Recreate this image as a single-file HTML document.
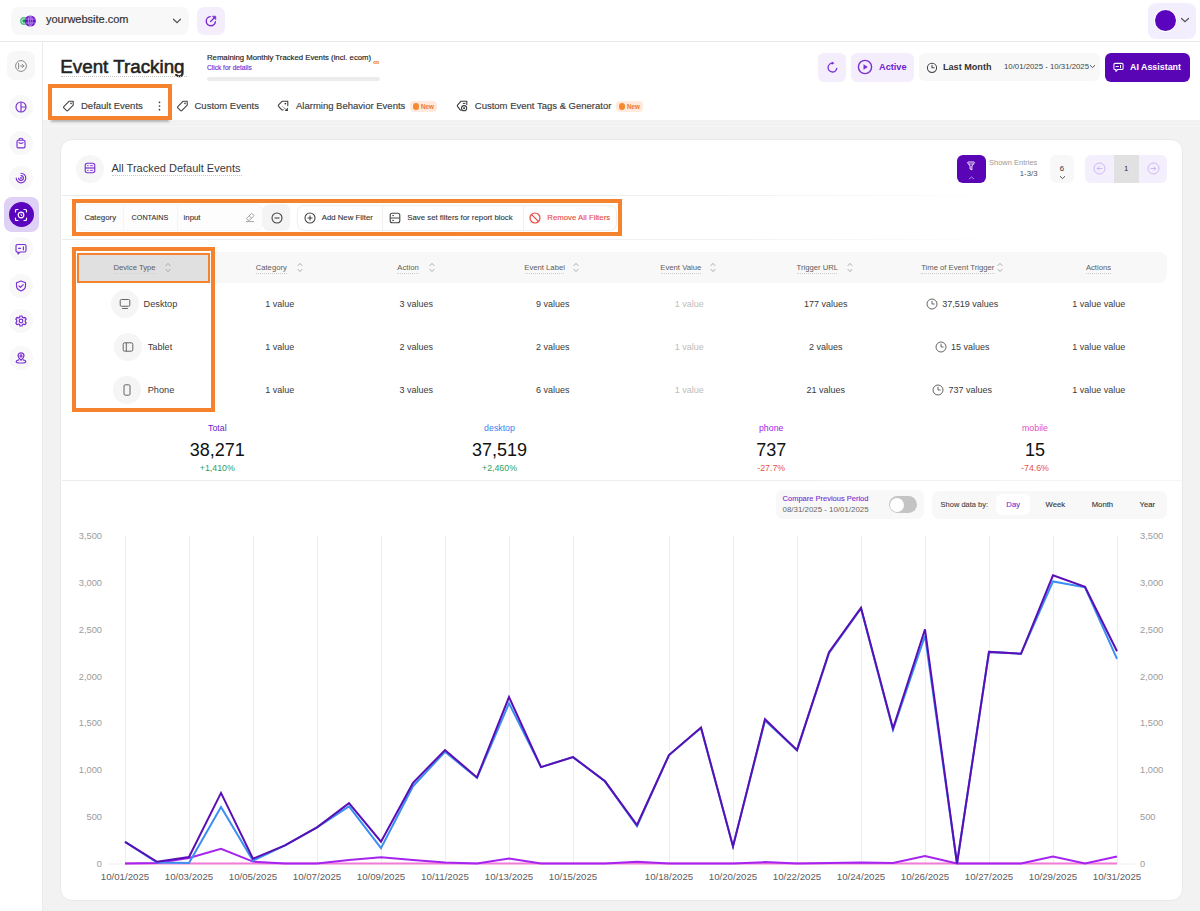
<!DOCTYPE html>
<html><head><meta charset="utf-8">
<style>
*{margin:0;padding:0;box-sizing:border-box}
html,body{width:1200px;height:911px;overflow:hidden;background:#fff;font-family:"Liberation Sans",sans-serif;color:#333}
.a{position:absolute}
.t{position:absolute;white-space:nowrap;line-height:20px;height:20px}
.c{text-align:center}
svg{display:block}
</style></head><body>

<!-- top header -->
<div class="a" style="left:0;top:41px;width:1200px;height:1px;background:#e9e9e9"></div>
<div class="a" style="left:10.5px;top:7px;width:178.5px;height:28px;border-radius:8px;background:#f8f8f8"></div>
<svg class="a" style="left:19px;top:13.6px" width="18" height="14" viewBox="0 0 18 14">
  <circle cx="5" cy="7" r="3.9" fill="#4fbf83"/>
  <circle cx="5" cy="7" r="2.5" fill="#dff5e8"/>
  <circle cx="5" cy="7" r="1.8" fill="#14a04c"/>
  <circle cx="11.3" cy="7" r="5.6" fill="#6a12c9"/>
  <g stroke="#e9dcfa" stroke-width="0.6" fill="none" opacity="0.85"><ellipse cx="11.3" cy="7" rx="2" ry="5.4"/><path d="M6 5 H16.6 M6 9 H16.6 M11.3 1.6 V12.4"/></g>
</svg>
<div class="t" style="left:46px;top:9.4px;font-size:11px;color:#333;-webkit-text-stroke:0.2px #333">yourwebsite.com</div>
<svg class="a" style="left:171.5px;top:16.5px" width="10" height="8" viewBox="0 0 10 8"><path d="M1.5 2.2 L5 5.6 L8.5 2.2" stroke="#555" stroke-width="1.2" fill="none" stroke-linecap="round"/></svg>
<div class="a" style="left:197px;top:7px;width:28px;height:27.5px;border-radius:7px;background:#f3edfc"></div>
<svg class="a" style="left:204px;top:13.6px" width="14" height="14" viewBox="0 0 14 14"><path d="M6.3 2.6 A4.6 4.6 0 1 0 11.4 7.7" stroke="#7a2ed4" stroke-width="1.4" fill="none" stroke-linecap="round"/><path d="M6.6 7.4 L10.6 3.4" stroke="#7a2ed4" stroke-width="1.4" stroke-linecap="round"/><path d="M8.3 2.2 H11.8 V5.7 Z" fill="#7a2ed4" stroke="#7a2ed4" stroke-width="0.6" stroke-linejoin="round"/></svg>
<div class="a" style="left:1148px;top:3px;width:48px;height:36px;border-radius:8px;background:#f3eefd"></div>
<div class="a" style="left:1154px;top:9px;width:23px;height:23px;border-radius:50%;background:#fff"></div>
<div class="a" style="left:1155px;top:10px;width:21px;height:21px;border-radius:50%;background:#5a05bd"></div>
<svg class="a" style="left:1180px;top:16px" width="10" height="8" viewBox="0 0 10 8"><path d="M1.5 2.5 L5 5.8 L8.5 2.5" stroke="#555" stroke-width="1.2" fill="none" stroke-linecap="round"/></svg>

<!-- sidebar -->
<div class="a" style="left:42px;top:42px;width:1px;height:869px;background:#ececec"></div>

<div class="a" style="left:7px;top:51px;width:28px;height:29px;border-radius:8px;background:#f7f7f7"></div>
<svg class="a" style="left:14px;top:58.5px" width="14" height="14" viewBox="0 0 14 14"><circle cx="7" cy="7" r="5.4" stroke="#8c8c8c" stroke-width="1" fill="none"/><path d="M4.6 4.4 V9.6 M6.2 7 H9.8 M8.2 5.3 L9.9 7 L8.2 8.7" stroke="#8c8c8c" stroke-width="1" fill="none" stroke-linecap="round" stroke-linejoin="round"/></svg>
<div class="a" style="left:9px;top:95px;width:24px;height:24px;border-radius:50%;background:#f8f8f8"></div>
<svg class="a" style="left:15px;top:101px" width="12" height="12" viewBox="0 0 12 12"><circle cx="6" cy="6" r="5" stroke="#7a2ed4" stroke-width="1.15" fill="none"/><path d="M6 1 V11 M6 6 H11" stroke="#7a2ed4" stroke-width="1.15" fill="none"/></svg>
<div class="a" style="left:9px;top:131px;width:24px;height:24px;border-radius:50%;background:#f8f8f8"></div>
<svg class="a" style="left:15px;top:137px" width="12" height="12" viewBox="0 0 12 12"><path d="M2 4.5 Q2 3.2 3.3 3.2 H8.7 Q10 3.2 10 4.5 V9.5 Q10 10.8 8.7 10.8 H3.3 Q2 10.8 2 9.5 Z M4 3.2 Q4 1.2 6 1.2 Q8 1.2 8 3.2 M4 5.6 Q6 7.2 8 5.6" stroke="#7a2ed4" stroke-width="1.15" fill="none" stroke-linecap="round"/></svg>
<div class="a" style="left:9px;top:166px;width:24px;height:24px;border-radius:50%;background:#f8f8f8"></div>
<svg class="a" style="left:15px;top:172px" width="12" height="12" viewBox="0 0 12 12"><path d="M6 1.2 A4.8 4.8 0 1 1 1.2 6 M6 3.6 A2.4 2.4 0 1 1 3.6 6" stroke="#7a2ed4" stroke-width="1.15" fill="none" stroke-linecap="round"/><circle cx="6" cy="6" r="0.9" fill="#7a2ed4"/></svg>
<div class="a" style="left:4px;top:197px;width:34.5px;height:35px;border-radius:8px;background:#dfd0f5"></div>
<div class="a" style="left:8.5px;top:202px;width:25px;height:25px;border-radius:50%;background:#5a05bd"></div>
<svg class="a" style="left:14px;top:207.5px" width="14" height="14" viewBox="0 0 14 14"><path d="M1.5 4 V2.5 Q1.5 1.5 2.5 1.5 H4 M10 1.5 H11.5 Q12.5 1.5 12.5 2.5 V4 M12.5 10 V11.5 Q12.5 12.5 11.5 12.5 H10 M4 12.5 H2.5 Q1.5 12.5 1.5 11.5 V10" stroke="#fff" stroke-width="1.2" fill="none" stroke-linecap="round"/><circle cx="7" cy="7" r="2.8" stroke="#fff" stroke-width="1.2" fill="none"/><path d="M7 5.6 V7.2 L8 7.8" stroke="#fff" stroke-width="0.9" fill="none"/></svg>
<div class="a" style="left:9px;top:237px;width:24px;height:24px;border-radius:50%;background:#f8f8f8"></div>
<svg class="a" style="left:15px;top:243px" width="12" height="12" viewBox="0 0 12 12"><path d="M2.5 1.5 H9.5 Q11 1.5 11 3 V7.5 Q11 9 9.5 9 H5 L3 11 V9 H2.5 Q1 9 1 7.5 V3 Q1 1.5 2.5 1.5 Z" stroke="#7a2ed4" stroke-width="1.15" fill="none" stroke-linejoin="round"/><path d="M3.6 5.3 H5.6 M8.4 3.8 V6.8" stroke="#7a2ed4" stroke-width="1.15" stroke-linecap="round"/></svg>
<div class="a" style="left:9px;top:274px;width:24px;height:24px;border-radius:50%;background:#f8f8f8"></div>
<svg class="a" style="left:15px;top:280px" width="12" height="12" viewBox="0 0 12 12"><path d="M6 1 L10.5 2.8 V6 Q10.5 9.3 6 11 Q1.5 9.3 1.5 6 V2.8 Z" stroke="#7a2ed4" stroke-width="1.15" fill="none" stroke-linejoin="round"/><path d="M4 6 L5.5 7.4 L8.2 4.7" stroke="#7a2ed4" stroke-width="1.15" fill="none" stroke-linecap="round" stroke-linejoin="round"/></svg>
<div class="a" style="left:9px;top:309px;width:24px;height:24px;border-radius:50%;background:#f8f8f8"></div>
<svg class="a" style="left:15px;top:315px" width="12" height="12" viewBox="0 0 12 12"><path d="M5 1 H7 L7.4 2.4 L8.7 3 L10 2.3 L11.2 4 L10.3 5.1 V6.9 L11.2 8 L10 9.7 L8.7 9 L7.4 9.6 L7 11 H5 L4.6 9.6 L3.3 9 L2 9.7 L0.8 8 L1.7 6.9 V5.1 L0.8 4 L2 2.3 L3.3 3 L4.6 2.4 Z" stroke="#7a2ed4" stroke-width="1.2" fill="none" stroke-linejoin="round"/><circle cx="6" cy="6" r="1.8" stroke="#7a2ed4" stroke-width="1.2" fill="none"/></svg>
<div class="a" style="left:9px;top:346px;width:24px;height:24px;border-radius:50%;background:#f8f8f8"></div>
<svg class="a" style="left:15px;top:351.5px" width="12" height="12" viewBox="0 0 12 12"><path d="M6 8.2 Q3 5.6 3 3.8 A3 3 0 0 1 9 3.8 Q9 5.6 6 8.2 Z" stroke="#7a2ed4" stroke-width="1.2" fill="none" stroke-linejoin="round"/><circle cx="6" cy="3.9" r="1" stroke="#7a2ed4" stroke-width="1.1" fill="none"/><path d="M3.8 7.8 Q1.2 8.4 1.2 9.4 Q1.2 11 6 11 Q10.8 11 10.8 9.4 Q10.8 8.4 8.2 7.8" stroke="#7a2ed4" stroke-width="1.2" fill="none" stroke-linecap="round"/></svg>



<!-- page grey bg -->
<div class="a" style="left:43px;top:120px;width:1157px;height:791px;background:#f2f2f2"></div>
<!-- title row -->
<div class="t" style="left:60.3px;top:56.8px;font-size:18.8px;color:#222;-webkit-text-stroke:0.55px #222">Event Tracking</div>
<div class="a" style="left:61px;top:76px;width:126px;height:0;border-top:1px dotted #c4c4c4"></div>
<div class="t" style="left:207px;top:47.6px;font-size:7.75px;color:#222;-webkit-text-stroke:0.15px #222">Remaining Monthly Tracked Events (incl. ecom)</div>
<div class="t" style="left:207px;top:57.5px;font-size:6.6px;color:#7a2ed4;-webkit-text-stroke:0.15px #7a2ed4">Click for details</div>
<div class="t" style="left:373px;top:51.5px;font-size:9px;font-weight:bold;color:#f5822d">&#8734;</div>
<div class="a" style="left:207px;top:76.5px;width:173px;height:4.5px;border-radius:2px;background:#ececec"></div>

<div class="a" style="left:817.5px;top:53.3px;width:28px;height:28.5px;border-radius:6px;background:#f3edfc"></div>
<svg class="a" style="left:824.5px;top:60px" width="14" height="14" viewBox="0 0 14 14"><path d="M7.5 3.2 A4.4 4.4 0 1 0 11.8 8.4" stroke="#7a2ed4" stroke-width="1.3" fill="none" stroke-linecap="round"/><path d="M6.8 1.6 L9.4 3.2 L6.8 4.8 Z" fill="#7a2ed4"/></svg>
<div class="a" style="left:851px;top:53.3px;width:63px;height:28.5px;border-radius:6px;background:#f3edfc"></div>
<svg class="a" style="left:857px;top:59px" width="16" height="16" viewBox="0 0 16 16"><circle cx="8" cy="8" r="6.6" stroke="#7a2ed4" stroke-width="1.4" fill="none"/><path d="M6.5 5.2 L10.8 8 L6.5 10.8 Z" fill="#7a2ed4"/></svg>
<div class="t" style="left:879px;top:57.3px;font-size:9.2px;font-weight:bold;color:#6d22cc">Active</div>
<div class="a" style="left:919px;top:53px;width:181px;height:28px;border-radius:6px;background:#f8f8f8"></div>
<svg class="a" style="left:926.4px;top:61.6px" width="12" height="12" viewBox="0 0 12 12"><circle cx="6" cy="5.8" r="4.6" stroke="#444" stroke-width="1.05" fill="none"/><path d="M6 3.3 V5.8 H8.1" stroke="#444" stroke-width="1.05" fill="none" stroke-linecap="round" stroke-linejoin="round"/></svg>
<div class="t" style="left:943px;top:57.3px;font-size:9.1px;font-weight:bold;color:#333">Last Month</div>
<div class="t" style="left:1004px;top:57px;font-size:7.8px;color:#444">10/01/2025 - 10/31/2025</div>
<svg class="a" style="left:1089px;top:64px" width="7" height="5" viewBox="0 0 7 5"><path d="M1 1.2 L3.5 3.6 L6 1.2" stroke="#444" stroke-width="0.9" fill="none"/></svg>
<div class="a" style="left:1105px;top:53px;width:85px;height:29px;border-radius:6px;background:#5a05b5"></div>
<svg class="a" style="left:1112.5px;top:61.6px" width="11" height="11" viewBox="0 0 12 12"><path d="M2.3 1.5 H9.7 Q11 1.5 11 2.8 V7 Q11 8.3 9.7 8.3 H5 L3.2 10.3 V8.3 H2.3 Q1 8.3 1 7 V2.8 Q1 1.5 2.3 1.5 Z" stroke="#fff" stroke-width="1.1" fill="none" stroke-linejoin="round"/><path d="M3.3 4.9 H5.8 M8.2 3.6 V6.2" stroke="#fff" stroke-width="1.1" stroke-linecap="round"/></svg>
<div class="t" style="left:1130px;top:56.8px;font-size:8.9px;font-weight:bold;color:#fff">AI Assistant</div>

<!-- tabs -->
<div class="a" style="left:51px;top:117px;width:118px;height:5px;background:rgba(0,0,0,0.25);filter:blur(1.2px)"></div>
<div class="a" style="left:48px;top:84px;width:124px;height:36px;border:4px solid #f5822d;background:#fff"></div>
<svg class="a" style="left:62px;top:100px" width="13" height="12" viewBox="0 0 13 12"><path d="M7.2 1.2 H11.2 V5.2 L5.8 10.6 Q5.2 11.2 4.6 10.6 L1.8 7.8 Q1.2 7.2 1.8 6.6 Z" stroke="#444" stroke-width="1.1" fill="none" stroke-linejoin="round"/><circle cx="9" cy="3.4" r="0.8" fill="#444"/></svg>
<div class="t" style="left:81px;top:95.8px;font-size:9.5px;color:#3d3d3d;-webkit-text-stroke:0.15px #3d3d3d">Default Events</div>
<svg class="a" style="left:157px;top:100px" width="5" height="12" viewBox="0 0 5 12"><circle cx="2.5" cy="2.3" r="0.85" fill="#3a3a3a"/><circle cx="2.5" cy="6" r="0.85" fill="#3a3a3a"/><circle cx="2.5" cy="9.7" r="0.85" fill="#3a3a3a"/></svg>
<svg class="a" style="left:176px;top:100px" width="13" height="12" viewBox="0 0 13 12"><path d="M7.2 1.2 H11.2 V5.2 L5.8 10.6 Q5.2 11.2 4.6 10.6 L1.8 7.8 Q1.2 7.2 1.8 6.6 Z" stroke="#444" stroke-width="1.1" fill="none" stroke-linejoin="round"/><circle cx="9" cy="3.4" r="0.8" fill="#444"/></svg>
<div class="t" style="left:194.5px;top:95.8px;font-size:9.5px;color:#3d3d3d;-webkit-text-stroke:0.15px #3d3d3d">Custom Events</div>
<svg class="a" style="left:277px;top:100px" width="12" height="12" viewBox="0 0 12 12"><path d="M10.8 5.6 V1.2 H5.3 L1.6 4.9 Q0.9 5.6 1.6 6.3 L4.6 9.6 Q5.3 10.3 6.1 9.6" stroke="#3a3a3a" stroke-width="1.05" fill="none" stroke-linejoin="round" stroke-linecap="round"/><circle cx="8.4" cy="3.6" r="0.9" fill="#3a3a3a"/><path d="M5.6 6.6 L9.2 9.6" stroke="#3a3a3a" stroke-width="0.9" stroke-dasharray="1 0.8"/><path d="M10.9 7.6 V10.9 H7.6 Z" fill="#3a3a3a"/></svg>
<div class="t" style="left:296px;top:95.8px;font-size:9.5px;color:#3d3d3d;-webkit-text-stroke:0.15px #3d3d3d">Alarming Behavior Events</div>
<div class="a" style="left:410px;top:100.5px;width:27px;height:11.5px;border-radius:4px;background:#ffeadd"></div>
<div class="a" style="left:412.5px;top:103px;width:6.5px;height:6.5px;border-radius:50%;background:#f7892f"></div>
<div class="t" style="left:421px;top:96.6px;font-size:6.3px;font-weight:bold;color:#f0792a">New</div>
<svg class="a" style="left:456px;top:100px" width="12" height="12" viewBox="0 0 12 12"><path d="M10.8 4.4 V1.2 H5.1 L1.5 5.2 Q1 5.8 1.5 6.4 L4.2 9.8 Q4.6 10.3 5.2 10.2" stroke="#3a3a3a" stroke-width="1.05" fill="none" stroke-linejoin="round" stroke-linecap="round"/><path d="M7.2 3.4 H9" stroke="#3a3a3a" stroke-width="1" stroke-linecap="round"/><circle cx="8.1" cy="8.2" r="2.6" stroke="#3a3a3a" stroke-width="1.05" fill="#fff"/><rect x="7.2" y="7.4" width="1.8" height="1.7" fill="#3a3a3a"/></svg>
<div class="t" style="left:474.8px;top:95.8px;font-size:9.5px;color:#3d3d3d;-webkit-text-stroke:0.15px #3d3d3d">Custom Event Tags &amp; Generator</div>
<div class="a" style="left:616px;top:100.5px;width:27px;height:11.5px;border-radius:4px;background:#ffeadd"></div>
<div class="a" style="left:618.5px;top:103px;width:6.5px;height:6.5px;border-radius:50%;background:#f7892f"></div>
<div class="t" style="left:627px;top:96.6px;font-size:6.3px;font-weight:bold;color:#f0792a">New</div>



<!-- card -->
<div class="a" style="left:60px;top:139px;width:1123px;height:762px;border-radius:12px;background:#fff;border:1px solid #e9e9e9"></div>
<div class="a" style="left:43px;top:125.5px;width:1157px;height:1px;background:#f6f6f6"></div>
<div class="a" style="left:76px;top:154.5px;width:28px;height:28px;border-radius:50%;background:#f6f6f6"></div>
<svg class="a" style="left:84px;top:162px" width="12" height="12" viewBox="0 0 12 12"><rect x="1.2" y="1.2" width="9.6" height="9.6" rx="2.2" stroke="#7a2ed4" stroke-width="1.1" fill="none"/><path d="M1 6 H11" stroke="#7a2ed4" stroke-width="1.2"/><path d="M3.2 3.6 H4.6 M6.2 3.6 H8.8 M3.2 8.4 H4.6 M6.2 8.4 H8.8" stroke="#7a2ed4" stroke-width="0.9"/></svg>
<div class="t" style="left:111.5px;top:157.8px;font-size:11px;color:#3a3a3a">All Tracked Default Events</div>
<div class="a" style="left:112px;top:175px;width:130px;height:0;border-top:1px dotted #c9c9c9"></div>
<div class="a" style="left:62px;top:195px;width:1120px;height:1px;background:linear-gradient(90deg,#ebebeb 0%,#efefef 55%,#ffffff 85%)"></div>
<div class="a" style="left:62px;top:239px;width:1120px;height:1px;background:linear-gradient(90deg,#ebebeb 0%,#efefef 55%,#ffffff 85%)"></div>

<!-- card header right -->
<div class="a" style="left:957px;top:154.5px;width:29px;height:28.5px;border-radius:6px;background:#5a05b5"></div>
<svg class="a" style="left:966px;top:161px" width="10" height="10" viewBox="0 0 10 10"><path d="M1.6 1.8 Q1.6 1 2.4 1 H7.6 Q8.4 1 8.4 1.8 L5.9 5 V8.9 L4.1 8 V5 Z" stroke="#fff" stroke-width="0.95" fill="none" stroke-linejoin="round"/><path d="M2.8 3 H7.2" stroke="#fff" stroke-width="0.8"/></svg>
<svg class="a" style="left:968px;top:175.5px" width="7" height="4" viewBox="0 0 7 4"><path d="M1 3 L3.5 1 L6 3" stroke="#b69ae0" stroke-width="0.9" fill="none"/></svg>
<div class="t" style="left:989px;top:153px;font-size:7.5px;color:#9a9a9a">Shown Entries</div>
<div class="t c" style="left:997.5px;top:164px;width:40px;text-align:right;font-size:7.8px;color:#555">1-3/3</div>
<div class="a" style="left:1050px;top:154.5px;width:24px;height:28.5px;border-radius:6px;background:#f8f8f8"></div>
<div class="t c" style="left:1050px;top:158.5px;width:24px;font-size:7.8px;color:#333">6</div>
<svg class="a" style="left:1058.5px;top:175px" width="7" height="5" viewBox="0 0 7 5"><path d="M1 1.2 L3.5 3.6 L6 1.2" stroke="#444" stroke-width="0.9" fill="none"/></svg>
<div class="a" style="left:1085px;top:154.5px;width:82px;height:28.5px;border-radius:6px;background:#f4effd"></div>
<div class="a" style="left:1114px;top:154.5px;width:24.5px;height:28.5px;background:#e1e1e1"></div>
<div class="t c" style="left:1114px;top:158.5px;width:24.5px;font-size:7.8px;color:#333">1</div>
<svg class="a" style="left:1093px;top:162px" width="13" height="13" viewBox="0 0 13 13"><circle cx="6.5" cy="6.5" r="5.5" stroke="#cdb6f0" stroke-width="1" fill="none"/><path d="M9 6.5 H4.2 M6 4.7 L4.2 6.5 L6 8.3" stroke="#cdb6f0" stroke-width="1" fill="none" stroke-linecap="round" stroke-linejoin="round"/></svg>
<svg class="a" style="left:1146.5px;top:162px" width="13" height="13" viewBox="0 0 13 13"><circle cx="6.5" cy="6.5" r="5.5" stroke="#cdb6f0" stroke-width="1" fill="none"/><path d="M4 6.5 H8.8 M7 4.7 L8.8 6.5 L7 8.3" stroke="#cdb6f0" stroke-width="1" fill="none" stroke-linecap="round" stroke-linejoin="round"/></svg>

<!-- filter bar -->
<div class="a" style="left:72px;top:199px;width:550px;height:37px;border:4px solid #f5822d"></div>
<div class="a" style="left:77px;top:204px;width:186px;height:27px;border-radius:7px;background:#fdfdfd;border:1px solid #f5f5f5"></div>
<div class="a" style="left:123px;top:205px;width:1px;height:25px;background:#f4f4f4"></div>
<div class="a" style="left:176.5px;top:205px;width:1px;height:25px;background:#f4f4f4"></div>
<div class="t" style="left:84.4px;top:207.5px;font-size:7.8px;color:#333;-webkit-text-stroke:0.1px #333">Category</div>
<div class="t" style="left:131.6px;top:207.5px;font-size:7.2px;color:#333;-webkit-text-stroke:0.1px #333">CONTAINS</div>
<div class="t" style="left:183.6px;top:207.5px;font-size:7.8px;color:#333;-webkit-text-stroke:0.1px #333">input</div>
<svg class="a" style="left:244px;top:211px" width="12" height="12" viewBox="0 0 12 12"><path d="M2.5 7.5 L7.2 2.8 Q7.8 2.2 8.4 2.8 L9.6 4 Q10.2 4.6 9.6 5.2 L5.6 9.2 H3.8 Z M5.2 4.8 L8 7.6 M2 10.6 H10" stroke="#9a9a9a" stroke-width="0.9" fill="none" stroke-linejoin="round"/></svg>
<div class="a" style="left:263px;top:204px;width:27px;height:27px;border-radius:6px;background:#f4f4f4"></div>
<svg class="a" style="left:270.5px;top:211.5px" width="12" height="12" viewBox="0 0 12 12"><circle cx="6" cy="6" r="5" stroke="#444" stroke-width="1.1" fill="none"/><path d="M3.5 6 H8.5" stroke="#444" stroke-width="1.1"/></svg>
<div class="a" style="left:296.5px;top:204.5px;width:320.5px;height:26px;border-radius:7px;background:#fff;border:1px solid #efefef;box-shadow:0 0 1px rgba(0,0,0,0.04)"></div>
<div class="a" style="left:381.5px;top:205.5px;width:1px;height:24px;background:#f0f0f0"></div>
<div class="a" style="left:522.5px;top:205.5px;width:1px;height:24px;background:#f0f0f0"></div>
<svg class="a" style="left:303.5px;top:211.5px" width="12" height="12" viewBox="0 0 12 12"><circle cx="6" cy="6" r="5" stroke="#444" stroke-width="1.1" fill="none"/><path d="M3.5 6 H8.5 M6 3.5 V8.5" stroke="#444" stroke-width="1.1"/></svg>
<div class="t" style="left:321.7px;top:207.5px;font-size:7.8px;color:#333;-webkit-text-stroke:0.1px #333">Add New Filter</div>
<svg class="a" style="left:388.5px;top:211.5px" width="12" height="12" viewBox="0 0 12 12"><rect x="1.2" y="1.2" width="9.6" height="9.6" rx="2" stroke="#444" stroke-width="1.1" fill="none"/><path d="M1.2 6 H10.8 M3.3 3.6 H5 M3.3 8.4 H5" stroke="#444" stroke-width="1"/></svg>
<div class="t" style="left:407.3px;top:207.5px;font-size:7.8px;color:#333;-webkit-text-stroke:0.1px #333">Save set filters for report block</div>
<svg class="a" style="left:529px;top:211.5px" width="12" height="12" viewBox="0 0 12 12"><circle cx="6" cy="6" r="5" stroke="#e8463c" stroke-width="1.2" fill="none"/><path d="M2.6 2.6 L9.4 9.4" stroke="#e8463c" stroke-width="1.2"/></svg>
<div class="t" style="left:547.3px;top:207.5px;font-size:7.8px;color:#e8463c;-webkit-text-stroke:0.1px #e8463c">Remove All Filters</div>

<!-- table -->
<div class="a" style="left:75px;top:252px;width:1092px;height:31px;border-radius:8px;background:#f8f8f8"></div>
<div class="a" style="left:72px;top:247px;width:143px;height:165px;border:4px solid #f5822d"></div>
<div class="a" style="left:77px;top:252.5px;width:133px;height:30.5px;border:2px solid #f5822d;background:#e0e0e0"></div>
<div class="t c" style="left:103.8px;top:257.6px;width:61.5px;font-size:7.7px;color:#5c5c5c">Device Type</div>
<div class="a" style="left:113.8px;top:272.5px;width:41.5px;height:0;border-top:1px dotted #d0d0d0"></div>
<svg class="a" style="left:165.0px;top:261.5px" width="6" height="11" viewBox="0 0 6 11"><path d="M1 3.6 L3 1.4 L5 3.6 M1 7.4 L3 9.6 L5 7.4" stroke="#9a9a9a" stroke-width="0.8" fill="none" stroke-linecap="round" stroke-linejoin="round"/></svg>
<div class="t c" style="left:245.5px;top:257.6px;width:51.5px;font-size:7.7px;color:#5c5c5c">Category</div>
<div class="a" style="left:255.5px;top:272.5px;width:31.5px;height:0;border-top:1px dotted #d0d0d0"></div>
<svg class="a" style="left:296.5px;top:261.5px" width="6" height="11" viewBox="0 0 6 11"><path d="M1 3.6 L3 1.4 L5 3.6 M1 7.4 L3 9.6 L5 7.4" stroke="#9a9a9a" stroke-width="0.8" fill="none" stroke-linecap="round" stroke-linejoin="round"/></svg>
<div class="t c" style="left:387.1px;top:257.6px;width:41.9px;font-size:7.7px;color:#5c5c5c">Action</div>
<div class="a" style="left:397.1px;top:272.5px;width:21.9px;height:0;border-top:1px dotted #d0d0d0"></div>
<svg class="a" style="left:428.5px;top:261.5px" width="6" height="11" viewBox="0 0 6 11"><path d="M1 3.6 L3 1.4 L5 3.6 M1 7.4 L3 9.6 L5 7.4" stroke="#9a9a9a" stroke-width="0.8" fill="none" stroke-linecap="round" stroke-linejoin="round"/></svg>
<div class="t c" style="left:514.8px;top:257.6px;width:59.6px;font-size:7.7px;color:#5c5c5c">Event Label</div>
<div class="a" style="left:524.8px;top:272.5px;width:39.6px;height:0;border-top:1px dotted #d0d0d0"></div>
<svg class="a" style="left:573.2px;top:261.5px" width="6" height="11" viewBox="0 0 6 11"><path d="M1 3.6 L3 1.4 L5 3.6 M1 7.4 L3 9.6 L5 7.4" stroke="#9a9a9a" stroke-width="0.8" fill="none" stroke-linecap="round" stroke-linejoin="round"/></svg>
<div class="t c" style="left:650.8px;top:257.6px;width:60.0px;font-size:7.7px;color:#5c5c5c">Event Value</div>
<div class="a" style="left:660.8px;top:272.5px;width:40.0px;height:0;border-top:1px dotted #d0d0d0"></div>
<svg class="a" style="left:710.3px;top:261.5px" width="6" height="11" viewBox="0 0 6 11"><path d="M1 3.6 L3 1.4 L5 3.6 M1 7.4 L3 9.6 L5 7.4" stroke="#9a9a9a" stroke-width="0.8" fill="none" stroke-linecap="round" stroke-linejoin="round"/></svg>
<div class="t c" style="left:787.3px;top:257.6px;width:60.0px;font-size:7.7px;color:#5c5c5c">Trigger URL</div>
<div class="a" style="left:797.3px;top:272.5px;width:40.0px;height:0;border-top:1px dotted #d0d0d0"></div>
<svg class="a" style="left:846.8px;top:261.5px" width="6" height="11" viewBox="0 0 6 11"><path d="M1 3.6 L3 1.4 L5 3.6 M1 7.4 L3 9.6 L5 7.4" stroke="#9a9a9a" stroke-width="0.8" fill="none" stroke-linecap="round" stroke-linejoin="round"/></svg>
<div class="t c" style="left:911.0px;top:257.6px;width:93.5px;font-size:7.7px;color:#5c5c5c">Time of Event Trigger</div>
<div class="a" style="left:921.0px;top:272.5px;width:73.5px;height:0;border-top:1px dotted #d0d0d0"></div>
<svg class="a" style="left:997.0px;top:261.5px" width="6" height="11" viewBox="0 0 6 11"><path d="M1 3.6 L3 1.4 L5 3.6 M1 7.4 L3 9.6 L5 7.4" stroke="#9a9a9a" stroke-width="0.8" fill="none" stroke-linecap="round" stroke-linejoin="round"/></svg>
<div class="t c" style="left:1076.0px;top:257.6px;width:45.0px;font-size:7.7px;color:#5c5c5c">Actions</div>
<div class="a" style="left:1086.0px;top:272.5px;width:25.0px;height:0;border-top:1px dotted #d0d0d0"></div>
<div class="t c" style="left:179.8px;top:293.8px;width:200px;font-size:9px;color:#3a3a3a">1 value</div>
<div class="t c" style="left:316.2px;top:293.8px;width:200px;font-size:9px;color:#3a3a3a">3 values</div>
<div class="t c" style="left:452.8px;top:293.8px;width:200px;font-size:9px;color:#3a3a3a">9 values</div>
<div class="t c" style="left:589.2px;top:293.8px;width:200px;font-size:9px;color:#bdbdbd">1 value</div>
<div class="t c" style="left:725.8px;top:293.8px;width:200px;font-size:9px;color:#3a3a3a">177 values</div>
<div class="t" style="left:762.2px;top:293.8px;width:400px;text-align:center;font-size:9px;color:#3a3a3a"><span style="display:inline-block;width:16px"></span>37,519 values</div>
<div class="t c" style="left:998.8px;top:293.8px;width:200px;font-size:9px;color:#3a3a3a">1 value value</div>
<div class="t c" style="left:179.8px;top:336.8px;width:200px;font-size:9px;color:#3a3a3a">1 value</div>
<div class="t c" style="left:316.2px;top:336.8px;width:200px;font-size:9px;color:#3a3a3a">2 values</div>
<div class="t c" style="left:452.8px;top:336.8px;width:200px;font-size:9px;color:#3a3a3a">2 values</div>
<div class="t c" style="left:589.2px;top:336.8px;width:200px;font-size:9px;color:#bdbdbd">1 value</div>
<div class="t c" style="left:725.8px;top:336.8px;width:200px;font-size:9px;color:#3a3a3a">2 values</div>
<div class="t" style="left:762.2px;top:336.8px;width:400px;text-align:center;font-size:9px;color:#3a3a3a"><span style="display:inline-block;width:16px"></span>15 values</div>
<div class="t c" style="left:998.8px;top:336.8px;width:200px;font-size:9px;color:#3a3a3a">1 value value</div>
<div class="t c" style="left:179.8px;top:379.7px;width:200px;font-size:9px;color:#3a3a3a">1 value</div>
<div class="t c" style="left:316.2px;top:379.7px;width:200px;font-size:9px;color:#3a3a3a">3 values</div>
<div class="t c" style="left:452.8px;top:379.7px;width:200px;font-size:9px;color:#3a3a3a">6 values</div>
<div class="t c" style="left:589.2px;top:379.7px;width:200px;font-size:9px;color:#bdbdbd">1 value</div>
<div class="t c" style="left:725.8px;top:379.7px;width:200px;font-size:9px;color:#3a3a3a">21 values</div>
<div class="t" style="left:762.2px;top:379.7px;width:400px;text-align:center;font-size:9px;color:#3a3a3a"><span style="display:inline-block;width:16px"></span>737 values</div>
<div class="t c" style="left:998.8px;top:379.7px;width:200px;font-size:9px;color:#3a3a3a">1 value value</div>
<div class="a" style="left:110.5px;top:289.8px;width:28px;height:28px;border-radius:50%;background:#f5f5f5"></div>
<svg class="a" style="left:118.5px;top:297.8px" width="12" height="12" viewBox="0 0 12 12"><rect x="1.2" y="1.5" width="9.6" height="6.8" rx="1.2" stroke="#555" stroke-width="0.9" fill="none"/><path d="M3.5 10.5 H8.5" stroke="#555" stroke-width="0.9" stroke-linecap="round"/></svg>
<div class="t" style="left:143.6px;top:293.8px;font-size:9.2px;color:#3a3a3a">Desktop</div>
<div class="a" style="left:113.7px;top:332.8px;width:28px;height:28px;border-radius:50%;background:#f5f5f5"></div>
<svg class="a" style="left:121.7px;top:340.8px" width="12" height="12" viewBox="0 0 12 12"><rect x="1.2" y="1.8" width="9.6" height="8.4" rx="1.5" stroke="#555" stroke-width="0.9" fill="none"/><path d="M4.3 1.8 V10.2" stroke="#555" stroke-width="0.9"/></svg>
<div class="t" style="left:147.7px;top:336.8px;font-size:9.2px;color:#3a3a3a">Tablet</div>
<div class="a" style="left:113.2px;top:375.7px;width:28px;height:28px;border-radius:50%;background:#f5f5f5"></div>
<svg class="a" style="left:121.2px;top:383.7px" width="12" height="12" viewBox="0 0 12 12"><rect x="3" y="0.8" width="6" height="10.4" rx="1.3" stroke="#555" stroke-width="0.9" fill="none"/></svg>
<div class="t" style="left:147.7px;top:379.7px;font-size:9.2px;color:#3a3a3a">Phone</div>
<svg class="a" style="left:925.8px;top:297.8px" width="12" height="12" viewBox="0 0 12 12"><circle cx="6" cy="6" r="5" stroke="#555" stroke-width="0.9" fill="none"/><path d="M6 3.2 V6 H8.2" stroke="#555" stroke-width="0.9" fill="none" stroke-linecap="round" stroke-linejoin="round"/></svg>
<svg class="a" style="left:934.5px;top:340.8px" width="12" height="12" viewBox="0 0 12 12"><circle cx="6" cy="6" r="5" stroke="#555" stroke-width="0.9" fill="none"/><path d="M6 3.2 V6 H8.2" stroke="#555" stroke-width="0.9" fill="none" stroke-linecap="round" stroke-linejoin="round"/></svg>
<svg class="a" style="left:931.9px;top:383.7px" width="12" height="12" viewBox="0 0 12 12"><circle cx="6" cy="6" r="5" stroke="#555" stroke-width="0.9" fill="none"/><path d="M6 3.2 V6 H8.2" stroke="#555" stroke-width="0.9" fill="none" stroke-linecap="round" stroke-linejoin="round"/></svg>
<div class="t c" style="left:117.30000000000001px;top:417.9px;width:200px;font-size:8.8px;color:#6a1bc6">Total</div>
<div class="t c" style="left:117.30000000000001px;top:439.5px;width:200px;font-size:18px;color:#111">38,271</div>
<div class="t c" style="left:117.30000000000001px;top:457.7px;width:200px;font-size:8.8px;color:#2f9e63">+1,410%</div>
<div class="t c" style="left:399.5px;top:417.9px;width:200px;font-size:8.8px;color:#3b82f6">desktop</div>
<div class="t c" style="left:399.5px;top:439.5px;width:200px;font-size:18px;color:#111">37,519</div>
<div class="t c" style="left:399.5px;top:457.7px;width:200px;font-size:8.8px;color:#2f9e63">+2,460%</div>
<div class="t c" style="left:671.2px;top:417.9px;width:200px;font-size:8.8px;color:#a224e8">phone</div>
<div class="t c" style="left:671.2px;top:439.5px;width:200px;font-size:18px;color:#111">737</div>
<div class="t c" style="left:671.2px;top:457.7px;width:200px;font-size:8.8px;color:#e5534b">-27.7%</div>
<div class="t c" style="left:935px;top:417.9px;width:200px;font-size:8.8px;color:#e54fc3">mobile</div>
<div class="t c" style="left:935px;top:439.5px;width:200px;font-size:18px;color:#111">15</div>
<div class="t c" style="left:935px;top:457.7px;width:200px;font-size:8.8px;color:#e5534b">-74.6%</div>
<div class="a" style="left:62px;top:479.5px;width:1120px;height:1.5px;background:linear-gradient(90deg,#ececec,#efefef 70%,#f6f6f6)"></div>
<div class="a" style="left:776px;top:490px;width:148px;height:28.5px;border-radius:7px;background:#f8f8f8"></div>
<div class="t" style="left:782.6px;top:489px;font-size:7.5px;color:#7a2ed4;-webkit-text-stroke:0.1px #7a2ed4">Compare Previous Period</div>
<div class="t" style="left:782.6px;top:499.5px;font-size:7.9px;color:#666">08/31/2025 - 10/01/2025</div>
<div class="a" style="left:888.5px;top:496px;width:28.5px;height:17px;border-radius:9px;background:#c4c4c4"></div>
<div class="a" style="left:890px;top:497.5px;width:14px;height:14px;border-radius:50%;background:#fff"></div>
<div class="a" style="left:932px;top:490.5px;width:235px;height:28px;border-radius:7px;background:#f8f8f8"></div>
<div class="t" style="left:940.6px;top:494.5px;font-size:7.5px;color:#444;-webkit-text-stroke:0.1px #444">Show data by:</div>
<div class="a" style="left:995.5px;top:494px;width:34.5px;height:21px;border-radius:6px;background:#fff"></div>
<div class="t c" style="left:983.2px;top:494.5px;width:60px;font-size:7.7px;color:#7a2ed4;-webkit-text-stroke:0.1px #7a2ed4">Day</div>
<div class="t c" style="left:1025.3px;top:494.5px;width:60px;font-size:7.7px;color:#333;-webkit-text-stroke:0.1px #333">Week</div>
<div class="t c" style="left:1072.4px;top:494.5px;width:60px;font-size:7.7px;color:#333;-webkit-text-stroke:0.1px #333">Month</div>
<div class="t c" style="left:1117.3px;top:494.5px;width:60px;font-size:7.7px;color:#333;-webkit-text-stroke:0.1px #333">Year</div>
<svg class="a" style="left:0;top:0" width="1200" height="911" viewBox="0 0 1200 911">
<line x1="125.5" y1="536" x2="125.5" y2="864" stroke="#eeeeee" stroke-width="1"/>
<line x1="189.5" y1="536" x2="189.5" y2="864" stroke="#eeeeee" stroke-width="1"/>
<line x1="253.5" y1="536" x2="253.5" y2="864" stroke="#eeeeee" stroke-width="1"/>
<line x1="317.5" y1="536" x2="317.5" y2="864" stroke="#eeeeee" stroke-width="1"/>
<line x1="381.5" y1="536" x2="381.5" y2="864" stroke="#eeeeee" stroke-width="1"/>
<line x1="445.5" y1="536" x2="445.5" y2="864" stroke="#eeeeee" stroke-width="1"/>
<line x1="509.5" y1="536" x2="509.5" y2="864" stroke="#eeeeee" stroke-width="1"/>
<line x1="573.5" y1="536" x2="573.5" y2="864" stroke="#eeeeee" stroke-width="1"/>
<line x1="669.5" y1="536" x2="669.5" y2="864" stroke="#eeeeee" stroke-width="1"/>
<line x1="733.5" y1="536" x2="733.5" y2="864" stroke="#eeeeee" stroke-width="1"/>
<line x1="797.5" y1="536" x2="797.5" y2="864" stroke="#eeeeee" stroke-width="1"/>
<line x1="861.5" y1="536" x2="861.5" y2="864" stroke="#eeeeee" stroke-width="1"/>
<line x1="925.5" y1="536" x2="925.5" y2="864" stroke="#eeeeee" stroke-width="1"/>
<line x1="989.5" y1="536" x2="989.5" y2="864" stroke="#eeeeee" stroke-width="1"/>
<line x1="1053.5" y1="536" x2="1053.5" y2="864" stroke="#eeeeee" stroke-width="1"/>
<line x1="1117.5" y1="536" x2="1117.5" y2="864" stroke="#eeeeee" stroke-width="1"/>
<line x1="108" y1="864" x2="1135" y2="864" stroke="#f0f0f0" stroke-width="1"/>
<polyline points="125,863.5 157,863.5 189,863.5 221,863.5 253,863.5 285,863.5 317,863.5 349,863.5 381,863.5 413,863.5 445,863.5 477,863.5 509,863.5 541,863.5 573,863.5 605,863.5 637,863.5 669,863.5 701,863.5 733,863.5 765,863.5 797,863.5 829,863.5 861,863.5 893,863.5 925,863.5 957,863.5 989,863.5 1021,863.5 1053,863.5 1085,863.5 1117,863.5" fill="none" stroke="#f27bd6" stroke-width="2"/>
<polyline points="125,863.5 157,863.0 189,857.9 221,848.7 253,861.6 285,863.5 317,863.5 349,859.9 381,857.3 413,859.9 445,862.6 477,863.5 509,858.5 541,863.5 573,863.5 605,863.5 637,861.8 669,863.5 701,863.5 733,863.5 765,862.1 797,863.5 829,863.0 861,862.6 893,863.0 925,856.0 957,863.5 989,863.5 1021,863.5 1053,856.5 1085,863.5 1117,856.5" fill="none" stroke="#a524ef" stroke-width="2"/>
<polyline points="125,841.9 157,862.6 189,863.0 221,807.1 253,860.7 285,845.4 317,827.3 349,806.3 381,848.1 413,786.2 445,751.8 477,778.0 509,703.3 541,767.1 573,757.1 605,781.3 637,826.3 669,755.0 701,728.0 733,846.4 765,720.5 797,750.1 829,653.2 861,608.4 893,729.9 925,635.7 957,863.5 989,651.9 1021,653.8 1053,581.4 1085,587.3 1117,658.8" fill="none" stroke="#3b8ef2" stroke-width="2"/>
<polyline points="125,841.9 157,861.8 189,857.0 221,792.9 253,858.7 285,845.4 317,827.3 349,803.1 381,841.7 413,782.9 445,750.0 477,777.4 509,697.1 541,767.1 573,757.1 605,781.3 637,825.0 669,755.0 701,727.5 733,846.4 765,719.2 797,750.1 829,652.1 861,607.8 893,728.5 925,629.3 957,863.5 989,651.9 1021,653.8 1053,575.3 1085,586.8 1117,651.2" fill="none" stroke="#5a0fb6" stroke-width="2"/>
</svg>
<div class="t" style="left:42px;top:526.4px;width:60px;text-align:right;font-size:9.3px;color:#9b9b9b">3,500</div>
<div class="t" style="left:1140px;top:526.4px;font-size:9.3px;color:#9b9b9b">3,500</div>
<div class="t" style="left:42px;top:573.1px;width:60px;text-align:right;font-size:9.3px;color:#9b9b9b">3,000</div>
<div class="t" style="left:1140px;top:573.1px;font-size:9.3px;color:#9b9b9b">3,000</div>
<div class="t" style="left:42px;top:619.9px;width:60px;text-align:right;font-size:9.3px;color:#9b9b9b">2,500</div>
<div class="t" style="left:1140px;top:619.9px;font-size:9.3px;color:#9b9b9b">2,500</div>
<div class="t" style="left:42px;top:666.6px;width:60px;text-align:right;font-size:9.3px;color:#9b9b9b">2,000</div>
<div class="t" style="left:1140px;top:666.6px;font-size:9.3px;color:#9b9b9b">2,000</div>
<div class="t" style="left:42px;top:713.3px;width:60px;text-align:right;font-size:9.3px;color:#9b9b9b">1,500</div>
<div class="t" style="left:1140px;top:713.3px;font-size:9.3px;color:#9b9b9b">1,500</div>
<div class="t" style="left:42px;top:760.0px;width:60px;text-align:right;font-size:9.3px;color:#9b9b9b">1,000</div>
<div class="t" style="left:1140px;top:760.0px;font-size:9.3px;color:#9b9b9b">1,000</div>
<div class="t" style="left:42px;top:806.8px;width:60px;text-align:right;font-size:9.3px;color:#9b9b9b">500</div>
<div class="t" style="left:1140px;top:806.8px;font-size:9.3px;color:#9b9b9b">500</div>
<div class="t" style="left:42px;top:853.5px;width:60px;text-align:right;font-size:9.3px;color:#9b9b9b">0</div>
<div class="t" style="left:1140px;top:853.5px;font-size:9.3px;color:#9b9b9b">0</div>
<div class="t c" style="left:85px;top:867px;width:80px;font-size:9.7px;color:#5e5e5e">10/01/2025</div>
<div class="t c" style="left:149px;top:867px;width:80px;font-size:9.7px;color:#5e5e5e">10/03/2025</div>
<div class="t c" style="left:213px;top:867px;width:80px;font-size:9.7px;color:#5e5e5e">10/05/2025</div>
<div class="t c" style="left:277px;top:867px;width:80px;font-size:9.7px;color:#5e5e5e">10/07/2025</div>
<div class="t c" style="left:341px;top:867px;width:80px;font-size:9.7px;color:#5e5e5e">10/09/2025</div>
<div class="t c" style="left:405px;top:867px;width:80px;font-size:9.7px;color:#5e5e5e">10/11/2025</div>
<div class="t c" style="left:469px;top:867px;width:80px;font-size:9.7px;color:#5e5e5e">10/13/2025</div>
<div class="t c" style="left:533px;top:867px;width:80px;font-size:9.7px;color:#5e5e5e">10/15/2025</div>
<div class="t c" style="left:629px;top:867px;width:80px;font-size:9.7px;color:#5e5e5e">10/18/2025</div>
<div class="t c" style="left:693px;top:867px;width:80px;font-size:9.7px;color:#5e5e5e">10/20/2025</div>
<div class="t c" style="left:757px;top:867px;width:80px;font-size:9.7px;color:#5e5e5e">10/22/2025</div>
<div class="t c" style="left:821px;top:867px;width:80px;font-size:9.7px;color:#5e5e5e">10/24/2025</div>
<div class="t c" style="left:885px;top:867px;width:80px;font-size:9.7px;color:#5e5e5e">10/26/2025</div>
<div class="t c" style="left:949px;top:867px;width:80px;font-size:9.7px;color:#5e5e5e">10/27/2025</div>
<div class="t c" style="left:1013px;top:867px;width:80px;font-size:9.7px;color:#5e5e5e">10/29/2025</div>
<div class="t c" style="left:1077px;top:867px;width:80px;font-size:9.7px;color:#5e5e5e">10/31/2025</div>
</body></html>
